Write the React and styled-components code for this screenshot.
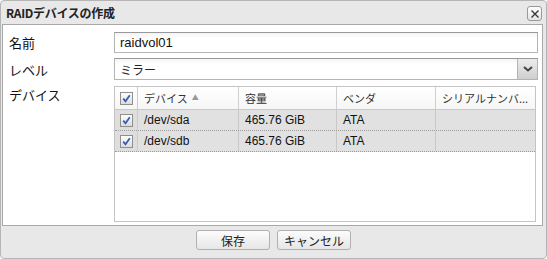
import React from "react";
import styled, { createGlobalStyle } from "styled-components";

const GlobalStyle = createGlobalStyle`
  html, body {
    margin: 0;
    padding: 0;
    background: #ffffff;
  }
  body {
    font-family: "Liberation Sans", "Noto Sans CJK JP", sans-serif;
    font-size: 12px;
    color: #000;
  }
`;

const columns = [
  { key: "device", label: "デバイス", width: 101, sorted: true },
  { key: "size", label: "容量", width: 98 },
  { key: "vendor", label: "ベンダ", width: 99 },
  { key: "serial", label: "シリアルナンバ...", width: 99 },
];

const rows = [
  { device: "/dev/sda", size: "465.76 GiB", vendor: "ATA", serial: "" },
  { device: "/dev/sdb", size: "465.76 GiB", vendor: "ATA", serial: "" },
];

const Check = () => (
  <CheckBox>
    <svg width="9" height="9" viewBox="0 0 9 9">
      <path d="M1.2 4.6 L3.5 7.2 L7.8 1.2" fill="none" stroke="#3a5fb0" strokeWidth="1.8" />
    </svg>
  </CheckBox>
);

const App = () => {
  return (
    <>
      <GlobalStyle />
      <Window>
        <TitleBar>
          <Title>RAIDデバイスの作成</Title>
          <CloseButton>
            <svg width="10" height="10" viewBox="0 0 10 10">
              <path d="M1.5 1.5 L8.5 8.5 M8.5 1.5 L1.5 8.5" stroke="#333" strokeWidth="1.3" />
            </svg>
          </CloseButton>
        </TitleBar>
        <Body>
          <FormRow>
            <Label>名前</Label>
            <TextInput>raidvol01</TextInput>
          </FormRow>
          <FormRow>
            <Label>レベル</Label>
            <Select>
              <SelectText>ミラー</SelectText>
              <DropButton>
                <svg width="10" height="6" viewBox="0 0 10 6">
                  <path d="M1 1 L5 4.5 L9 1" fill="none" stroke="#444" strokeWidth="2" />
                </svg>
              </DropButton>
            </Select>
          </FormRow>
          <FormRow $grow>
            <Label>デバイス</Label>
            <Grid>
              <HeaderRow>
                <CheckCell $header>
                  <Check />
                </CheckCell>
                {columns.map((c) => (
                  <HeaderCell key={c.key} $width={c.width}>
                    <HeaderText>{c.label}</HeaderText>
                    {c.sorted && <SortArrow>▲</SortArrow>}
                  </HeaderCell>
                ))}
              </HeaderRow>
              {rows.map((r) => (
                <DataRow key={r.device}>
                  <CheckCell>
                    <Check />
                  </CheckCell>
                  {columns.map((c) => (
                    <Cell key={c.key} $width={c.width}>
                      {r[c.key]}
                    </Cell>
                  ))}
                </DataRow>
              ))}
            </Grid>
          </FormRow>
        </Body>
        <Footer>
          <Button $width={74}>保存</Button>
          <Button $width={74}>キャンセル</Button>
        </Footer>
      </Window>
    </>
  );
};

export default App;

const Window = styled.div`
  width: 547px;
  height: 259px;
  box-sizing: border-box;
  background: #e8e8e8;
  border: 1px solid #b5b5b5;
  border-radius: 4px;
  display: flex;
  flex-direction: column;
  overflow: hidden;
`;

const TitleBar = styled.div`
  height: 23px;
  display: flex;
  align-items: center;
  justify-content: space-between;
  padding: 0 4px 0 5px;
`;

const Title = styled.div`
  font-family: "Noto Sans CJK JP", sans-serif;
  font-weight: bold;
  font-size: 12px;
  color: #222;
  letter-spacing: -0.3px;
`;

const CloseButton = styled.div`
  width: 13px;
  height: 13px;
  border: 1px solid #999;
  border-radius: 3px;
  background: linear-gradient(#ffffff, #e4e4e4);
  display: flex;
  align-items: center;
  justify-content: center;
  margin-top: 2px;
`;

const Body = styled.div`
  margin: 0 3px 0 1px;
  height: 202px;
  box-sizing: border-box;
  background: #fff;
  border: 1px solid #a9a9a9;
  padding: 7px 4px 5px 6px;
  display: flex;
  flex-direction: column;
  gap: 5px;
`;

const FormRow = styled.div`
  display: flex;
  align-items: ${(p) => (p.$grow ? "flex-start" : "center")};
  flex: ${(p) => (p.$grow ? 1 : "none")};
  min-height: 0;
`;

const Label = styled.div`
  width: 105px;
  font-family: "Noto Sans CJK JP", sans-serif;
  font-size: 13px;
  color: #111;
`;

const TextInput = styled.div`
  flex: 1;
  height: 21px;
  box-sizing: border-box;
  border: 1px solid #b4b4b4;
  border-top-color: #999;
  padding: 0 5px;
  display: flex;
  align-items: center;
  font-family: "Liberation Sans", sans-serif;
  font-size: 13px;
  color: #111;
  background: linear-gradient(#f4f4f4, #ffffff 5px);
`;

const Select = styled.div`
  flex: 1;
  height: 22px;
  box-sizing: border-box;
  border: 1px solid #b4b4b4;
  border-top-color: #999;
  display: flex;
  align-items: stretch;
  background: linear-gradient(#f4f4f4, #ffffff 5px);
`;

const SelectText = styled.div`
  flex: 1;
  padding: 0 5px;
  display: flex;
  align-items: center;
  font-family: "Noto Sans CJK JP", sans-serif;
  font-size: 12px;
  color: #222;
`;

const DropButton = styled.div`
  width: 19px;
  border-left: 1px solid #b4b4b4;
  background: linear-gradient(#ececec, #cfcfcf);
  display: flex;
  align-items: center;
  justify-content: center;
`;

const Grid = styled.div`
  width: 422px;
  height: 136px;
  box-sizing: border-box;
  border: 1px solid #c4c4c4;
  margin-top: 1px;
  display: flex;
  flex-direction: column;
  background: #fff;
`;

const HeaderRow = styled.div`
  display: flex;
  height: 22px;
  border-bottom: 1px solid #c8c8c8;
  background: linear-gradient(#ffffff, #f6f6f6);
`;

const DataRow = styled.div`
  display: flex;
  height: 20px;
  background: #e1e1e1;
  border-bottom: 1px dotted #9a9a9a;
`;

const CheckCell = styled.div`
  width: 23px;
  box-sizing: border-box;
  border-right: 1px solid #cccccc;
  display: flex;
  align-items: center;
  justify-content: center;
  background: ${(p) => (p.$header ? "transparent" : "#dedede")};
`;

const CheckBox = styled.div`
  width: 11px;
  height: 11px;
  border: 1px solid #8f8f8f;
  background: linear-gradient(#fdfdfd, #dcdcdc);
  display: flex;
  align-items: center;
  justify-content: center;
`;

const HeaderCell = styled.div`
  width: ${(p) => p.$width}px;
  box-sizing: border-box;
  border-right: 1px solid #d0d0d0;
  padding: 0 3px 0 6px;
  display: flex;
  align-items: center;
  font-family: "Noto Sans CJK JP", sans-serif;
  font-size: 11px;
  color: #333;
  min-width: 0;
  &:last-child {
    border-right: none;
  }
`;

const HeaderText = styled.span`
  white-space: nowrap;
`;

const SortArrow = styled.span`
  font-size: 7px;
  color: #999;
  margin-left: 4px;
  margin-top: -2px;
`;

const Cell = styled.div`
  width: ${(p) => p.$width}px;
  box-sizing: border-box;
  border-right: 1px solid #c8c8c8;
  padding-left: 6px;
  display: flex;
  align-items: center;
  font-family: "Liberation Sans", "Noto Sans CJK JP", sans-serif;
  font-size: 12px;
  color: #111;
  &:last-child {
    border-right: none;
  }
`;

const Footer = styled.div`
  flex: 1;
  display: flex;
  justify-content: center;
  align-items: flex-start;
  gap: 7px;
  padding-top: 4px;
`;

const Button = styled.div`
  width: ${(p) => p.$width}px;
  height: 20px;
  box-sizing: border-box;
  border: 1px solid #b0b0b0;
  border-radius: 3px;
  background: linear-gradient(#fcfcfc, #e6e6e6);
  display: flex;
  align-items: center;
  justify-content: center;
  font-family: "Noto Sans CJK JP", sans-serif;
  font-size: 12px;
  color: #222;
`;
